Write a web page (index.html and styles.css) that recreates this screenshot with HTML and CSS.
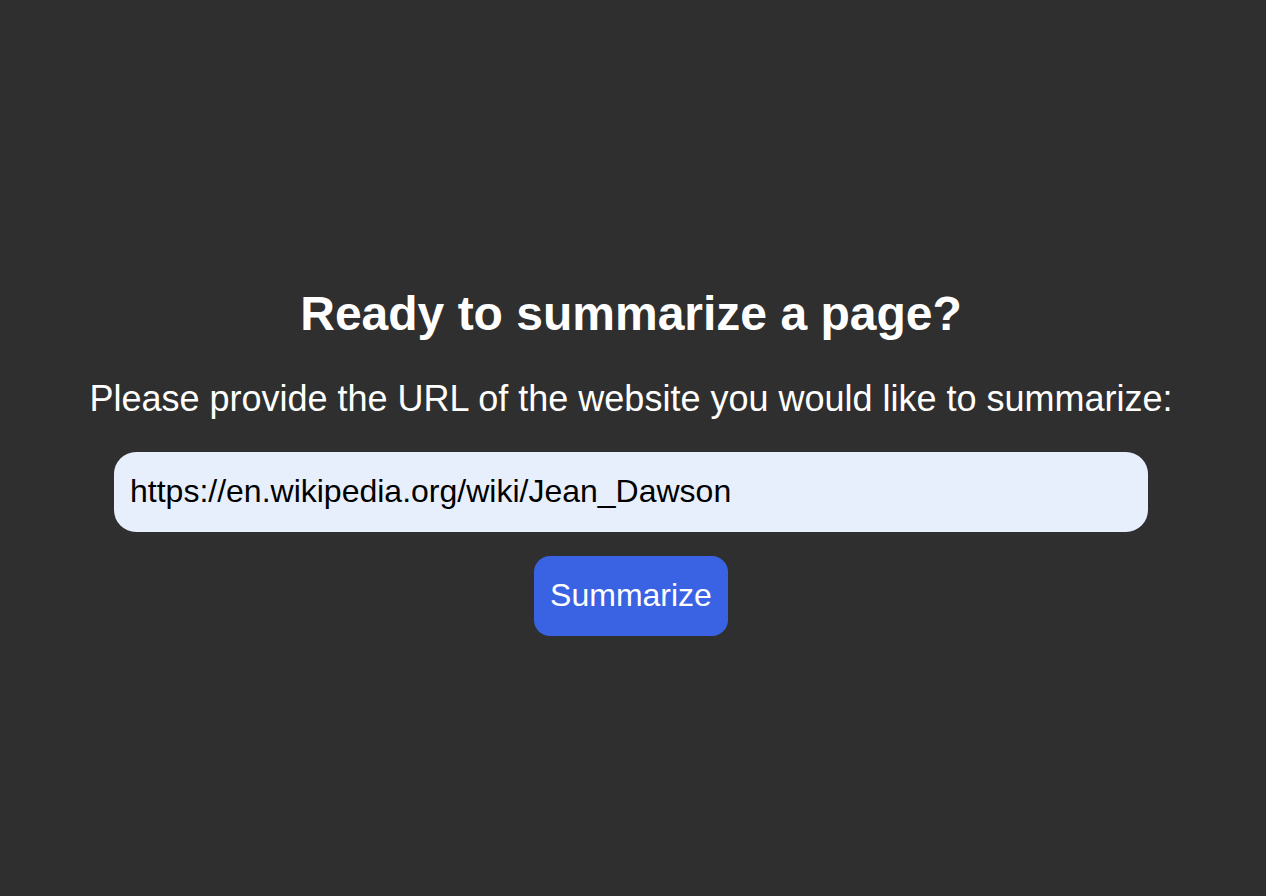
FILE: index.html
```html
<!DOCTYPE html>
<html lang="en">
<head>
<meta charset="utf-8">
<title>Summarize</title>
<link rel="stylesheet" href="styles.css">
</head>
<body>
<main class="page">
  <h1 class="title">Ready to summarize a page?</h1>
  <p class="prompt">Please provide the URL of the website you would like to summarize:</p>
  <input class="url" type="text" value="https://en.wikipedia.org/wiki/Jean_Dawson">
  <button class="submit" type="button">Summarize</button>
</main>
</body>
</html>
```
FILE: styles.css
```css
html, body {
  background: #2f2f2f;
}
body {
  margin: 8px;
  font-family: "Liberation Sans", Arial, sans-serif;
  color: #ffffff;
}
.page {
  box-sizing: border-box;
  min-height: 880px;
  padding: 26px 4px 0 0;
  display: flex;
  flex-direction: column;
  align-items: center;
  justify-content: center;
  text-align: center;
}
.title {
  font-size: 48px;
  font-weight: 700;
  margin: 0 0 37px;
  line-height: 1.15;
}
.prompt {
  font-size: 36px;
  margin: 0 0 32px;
  line-height: 1.15;
}
.url {
  box-sizing: border-box;
  width: 1034px;
  height: 80px;
  padding: 0 16px;
  border: none;
  border-radius: 22px;
  background: #e8effc;
  color: #000;
  font-family: "Liberation Sans", Arial, sans-serif;
  font-size: 32px;
  outline: none;
  margin: 0 0 24px;
}
.submit {
  height: 80px;
  padding: 0 16px;
  border: none;
  border-radius: 16px;
  background: #3a63e4;
  color: #fff;
  font-family: "Liberation Sans", Arial, sans-serif;
  font-size: 32px;
}
```
